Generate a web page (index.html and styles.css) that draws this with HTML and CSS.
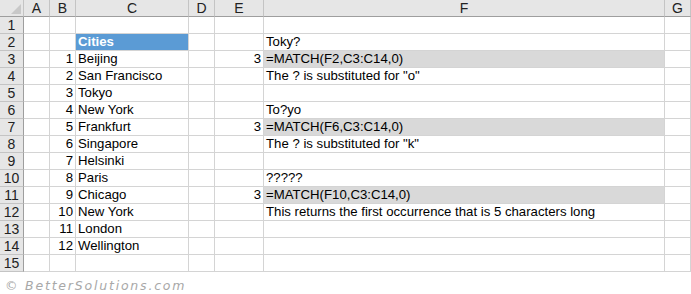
FILE: index.html
```html
<!DOCTYPE html>
<html>
<head>
<meta charset="utf-8">
<link rel="stylesheet" href="styles.css">
</head>
<body>
<div class="sheet">
  <div class="hd corner"><span class="tri"></span></div>
  <div class="hd col">A</div><div class="hd col">B</div><div class="hd col">C</div><div class="hd col">D</div><div class="hd col">E</div><div class="hd col">F</div><div class="hd col">G</div>

  <div class="hd row">1</div><div class="c"></div><div class="c"></div><div class="c"></div><div class="c"></div><div class="c"></div><div class="c"></div><div class="c"></div>

  <div class="hd row">2</div><div class="c"></div><div class="c"></div><div class="c title">Cities</div><div class="c"></div><div class="c"></div><div class="c">Toky?</div><div class="c"></div>

  <div class="hd row">3</div><div class="c"></div><div class="c num">1</div><div class="c">Beijing</div><div class="c"></div><div class="c num">3</div><div class="c fx">=MATCH(F2,C3:C14,0)</div><div class="c"></div>

  <div class="hd row">4</div><div class="c"></div><div class="c num">2</div><div class="c">San Francisco</div><div class="c"></div><div class="c"></div><div class="c">The ? is substituted for "o"</div><div class="c"></div>

  <div class="hd row">5</div><div class="c"></div><div class="c num">3</div><div class="c">Tokyo</div><div class="c"></div><div class="c"></div><div class="c"></div><div class="c"></div>

  <div class="hd row">6</div><div class="c"></div><div class="c num">4</div><div class="c">New York</div><div class="c"></div><div class="c"></div><div class="c">To?yo</div><div class="c"></div>

  <div class="hd row">7</div><div class="c"></div><div class="c num">5</div><div class="c">Frankfurt</div><div class="c"></div><div class="c num">3</div><div class="c fx">=MATCH(F6,C3:C14,0)</div><div class="c"></div>

  <div class="hd row">8</div><div class="c"></div><div class="c num">6</div><div class="c">Singapore</div><div class="c"></div><div class="c"></div><div class="c">The ? is substituted for "k"</div><div class="c"></div>

  <div class="hd row">9</div><div class="c"></div><div class="c num">7</div><div class="c">Helsinki</div><div class="c"></div><div class="c"></div><div class="c"></div><div class="c"></div>

  <div class="hd row">10</div><div class="c"></div><div class="c num">8</div><div class="c">Paris</div><div class="c"></div><div class="c"></div><div class="c">?????</div><div class="c"></div>

  <div class="hd row">11</div><div class="c"></div><div class="c num">9</div><div class="c">Chicago</div><div class="c"></div><div class="c num">3</div><div class="c fx">=MATCH(F10,C3:C14,0)</div><div class="c"></div>

  <div class="hd row">12</div><div class="c"></div><div class="c num">10</div><div class="c">New York</div><div class="c"></div><div class="c"></div><div class="c">This returns the first occurrence that is 5 characters long</div><div class="c"></div>

  <div class="hd row">13</div><div class="c"></div><div class="c num">11</div><div class="c">London</div><div class="c"></div><div class="c"></div><div class="c"></div><div class="c"></div>

  <div class="hd row">14</div><div class="c"></div><div class="c num">12</div><div class="c">Wellington</div><div class="c"></div><div class="c"></div><div class="c"></div><div class="c"></div>

  <div class="hd row">15</div><div class="c"></div><div class="c"></div><div class="c"></div><div class="c"></div><div class="c"></div><div class="c"></div><div class="c"></div>
</div>
<div class="brand">© BetterSolutions.com</div>
</body>
</html>
```

FILE: styles.css
```css
html, body {
  margin: 0;
  padding: 0;
  background: #ffffff;
}

body {
  width: 691px;
  height: 294px;
  overflow: hidden;
  font-family: "Liberation Sans", Arial, sans-serif;
  font-size: 13.2px;
  color: #000000;
}

.sheet {
  display: grid;
  grid-template-columns: 24px 26px 26px 113px 26px 49px 401px 26px;
  grid-template-rows: 17px repeat(15, 17px);
}

.c, .hd {
  box-sizing: border-box;
  border-right: 1px solid #d4d4d4;
  border-bottom: 1px solid #d4d4d4;
  line-height: 16px;
  white-space: nowrap;
  overflow: visible;
  padding: 0 2px;
}

.hd {
  background: #e6e6e6;
  color: #222222;
  font-size: 14px;
}

.hd.col {
  text-align: center;
  border-right-color: #c4c4c4;
  border-bottom-color: #9e9e9e;
}

.hd.row {
  text-align: center;
  padding: 0;
  border-right-color: #9e9e9e;
  border-bottom-color: #c4c4c4;
}

.hd.corner {
  position: relative;
  border-right-color: #c4c4c4;
  border-bottom-color: #9e9e9e;
}

/* select-all triangle in the header corner */
.tri {
  position: absolute;
  right: 2px;
  bottom: 2px;
  width: 0;
  height: 0;
  border-left: 10px solid transparent;
  border-bottom: 10px solid #c8c8c8;
}

.num {
  text-align: right;
}

.title {
  background: #5b9bd5;
  color: #ffffff;
  font-weight: bold;
}

.fx {
  background: #d9d9d9;
}

.brand {
  margin: 6px 0 0 5px;
  font-family: "DejaVu Sans", sans-serif;
  font-style: italic;
  font-size: 12.5px;
  letter-spacing: 1.8px;
  color: #a8a8a8;
}
```
